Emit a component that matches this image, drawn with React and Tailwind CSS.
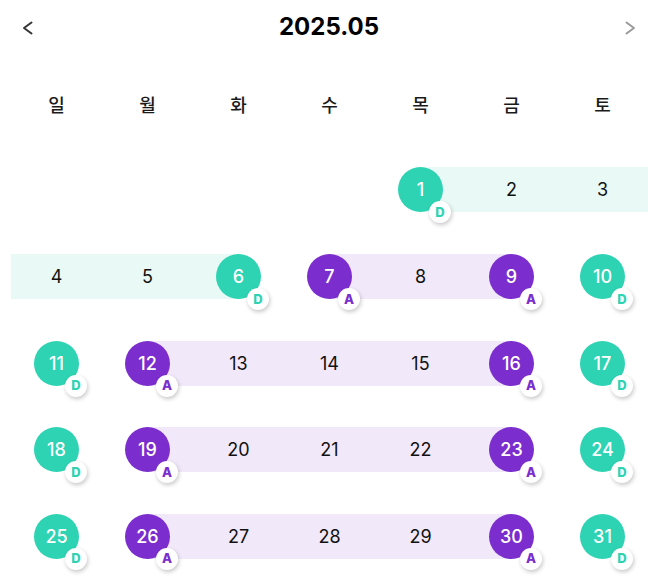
import React from "react";

const TEAL = "D";
const PURPLE = "A";

function buildWeeks() {
  const cells = [];
  for (let i = 0; i < 4; i++) cells.push(null);
  const purpleStart = [7, 12, 19, 26];
  const purpleEnd = [9, 16, 23, 30];
  for (let d = 1; d <= 31; d++) {
    let mark = null;
    let band = null;
    let pos = null;
    if (d === 1) { mark = TEAL; band = "teal"; pos = "start"; }
    else if (d >= 2 && d <= 5) { band = "teal"; pos = "mid"; }
    else if (d === 6) { mark = TEAL; band = "teal"; pos = "end"; }
    else if (purpleStart.includes(d)) { mark = PURPLE; band = "purple"; pos = "start"; }
    else if (purpleEnd.includes(d)) { mark = PURPLE; band = "purple"; pos = "end"; }
    else if ([8, 13, 14, 15, 20, 21, 22, 27, 28, 29].includes(d)) { band = "purple"; pos = "mid"; }
    else { mark = TEAL; }
    cells.push({ d, mark, band, pos });
  }
  const weeks = [];
  for (let i = 0; i < cells.length; i += 7) weeks.push(cells.slice(i, i + 7));
  return weeks;
}

const bandClass = {
  teal: {
    start: "bg-[linear-gradient(to_right,transparent_50%,#e9f9f5_50%)]",
    mid: "bg-[#e9f9f5]",
    end: "bg-[linear-gradient(to_right,#e9f9f5_50%,transparent_50%)]",
  },
  purple: {
    start: "bg-[linear-gradient(to_right,transparent_50%,#f1e8f9_50%)]",
    mid: "bg-[#f1e8f9]",
    end: "bg-[linear-gradient(to_right,#f1e8f9_50%,transparent_50%)]",
  },
};

function Cell({ cell }) {
  if (!cell) return <div className="h-full" />;
  const bg = cell.band ? bandClass[cell.band][cell.pos] : "";
  const isTeal = cell.mark === TEAL;
  return (
    <div className="h-full flex items-center">
      <div className={`w-full h-[45px] flex items-center justify-center ${bg}`}>
        {cell.mark ? (
          <div
            className={`relative w-[45px] h-[45px] rounded-full flex items-center justify-center text-white text-[18px] font-medium ${
              isTeal ? "bg-[#2dd3b2]" : "bg-[#7b2ecd]"
            }`}
          >
            {cell.d}
            <div
              className={`absolute left-[31px] top-[34px] w-[22px] h-[22px] rounded-full bg-white flex items-center justify-center text-[13px] leading-none font-extrabold shadow-[1px_2px_4px_rgba(0,0,0,0.22)] ${
                isTeal ? "text-[#2dd3b2]" : "text-[#7b2ecd]"
              }`}
            >
              {cell.mark}
            </div>
          </div>
        ) : (
          <span className="text-[18px] text-[#111]">{cell.d}</span>
        )}
      </div>
    </div>
  );
}

export default function App() {
  const weeks = buildWeeks();
  const days = ["일", "월", "화", "수", "목", "금", "토"];
  return (
    <div className="w-[662px] h-[587px] bg-white overflow-hidden font-['Inter','Noto_Sans_CJK_KR',sans-serif]">
      <div className="h-[53px] flex items-center justify-between pl-[21px] pr-[25px]">
        <svg width="14" height="14" viewBox="0 0 14 14" className="mt-[2px]">
          <polyline points="10.5,1.5 3,7 10.5,12.5" fill="none" stroke="#333" strokeWidth="2" strokeLinecap="round" strokeLinejoin="round" />
        </svg>
        <div className="text-[24px] font-bold text-black">2025.05</div>
        <svg width="14" height="14" viewBox="0 0 14 14" className="mt-[2px]">
          <polyline points="3.5,1.5 11,7 3.5,12.5" fill="none" stroke="#9a9a9a" strokeWidth="2" strokeLinecap="round" strokeLinejoin="round" />
        </svg>
      </div>
      <div className="ml-[11px] w-[637px] mt-[29px] h-[44px] grid grid-cols-7 items-center">
        {days.map((d) => (
          <div key={d} className="text-center text-[18px] font-medium text-[#1a1a1a] font-['Noto_Sans_CJK_KR',sans-serif]">
            {d}
          </div>
        ))}
      </div>
      <div className="ml-[11px] w-[637px] mt-[20.7px] flex flex-col">
        {weeks.map((w, i) => (
          <div key={i} className="h-[86.6px] grid grid-cols-7">
            {Array.from({ length: 7 }).map((_, j) => (
              <Cell key={j} cell={w[j] || null} />
            ))}
          </div>
        ))}
      </div>
    </div>
  );
}
